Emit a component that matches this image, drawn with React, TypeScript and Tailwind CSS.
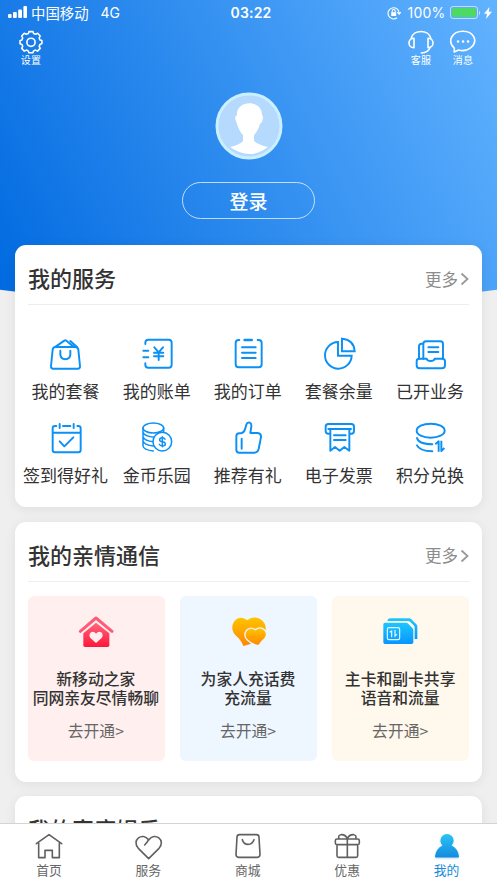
import type { ReactNode } from "react";
import { clsx } from "clsx";

type Item = { label: string; icon: ReactNode };

// Thin outlined icon used in the service grid
const LineIcon = ({ box, children }: { box: string; children: ReactNode }) => (
	<svg
		viewBox={box}
		className="size-9"
		fill="none"
		stroke="#0b90f5"
		strokeWidth="5.8"
		strokeLinecap="round"
		strokeLinejoin="round"
	>
		{children}
	</svg>
);

const services: Item[] = [
	{
		label: "我的套餐",
		icon: (
			<LineIcon box="99 33 108 108">
				<path d="M121 66h60q8 0 9 8l5 49q1 8-7 8h-73q-8 0-7-8l5-49q1-8 8-8z" />
				<path d="M136 77v12q1 13 15 14 14-1 15-14V77" />
				<path d="M122 65l26-18q3-2 6 0l22 18M166 48l20 18" />
			</LineIcon>
		),
	},
	{
		label: "我的账单",
		icon: (
			<LineIcon box="372 33 108 108">
				<path d="M391 57v-4q0-9 9-9h61q9 0 9 9v66q0 9-9 9h-61q-9 0-9-9v-4" />
				<path d="M385 77h15M385 97h15M418 67l13 15 13-15M431 83v22M417 83h28M417 94h28" />
			</LineIcon>
		),
	},
	{
		label: "我的订单",
		icon: (
			<LineIcon box="-60 33 108 108">
				<path d="M-32 45h-2q-9 0-9 9v64q0 9 9 9h60q9 0 9-9V54q0-9-9-9h-3" />
				<path d="M-16 45H5" strokeWidth="8" />
				<path d="M-24 67h41M-24 83h41M-24 99h41" />
			</LineIcon>
		),
	},
	{
		label: "套餐余量",
		icon: (
			<LineIcon box="213 33 108 108">
				<path d="M264 51a40 40 0 1 0 41 41h-41z" strokeLinejoin="miter" />
				<path d="M276 41v38h38q-2-35-38-38z" strokeLinejoin="miter" />
			</LineIcon>
		),
	},
	{
		label: "已开业务",
		icon: (
			<LineIcon box="486 33 108 108">
				<path d="M507 101V64q0-8 8-8h5M520 101V57q0-8 8-8h43q8 0 8 8v44M535 67h30M535 81h30" />
				<path d="M507 101h23q1 7 12 7t12-7h23q8 0 8 8v12q0 9-9 9h-67q-9 0-9-9v-12q0-8 7-8z" />
			</LineIcon>
		),
	},
	{
		label: "签到得好礼",
		icon: (
			<LineIcon box="99 285 108 108">
				<path d="M124 303h-4q-7 0-7 7v65q0 7 7 7h70q7 0 7-7v-65q0-7-7-7h-3M113 323h84M144 303h22" />
				<path d="M134 297v12M176 297v12M134 349l14 15 27-27" />
			</LineIcon>
		),
	},
	{
		label: "金币乐园",
		icon: (
			<LineIcon box="372 285 108 108">
				<g strokeWidth="4.5">
					<ellipse cx="415" cy="309" rx="31" ry="15" />
					<path d="M384 310v53q2 12 31 15M446 309v12M384 322q5 13 34 15M384 335q5 13 31 15M384 348q5 13 31 15" />
					<circle cx="442" cy="350" r="28" fill="#fff" />
					<path d="M450 343q-2-5-8-5-8 0-8 6t8 6q9 1 9 7t-9 6q-7 0-9-5M442 335v30" />
				</g>
			</LineIcon>
		),
	},
	{
		label: "推荐有礼",
		icon: (
			<LineIcon box="-60 285 108 108">
				<path d="M-32 325h5q9-1 12-12l4-14q3-8 10-6 6 2 5 11l-3 20h22q11 1 10 12l-7 36q-3 11-13 11h-45q-9 0-9-9v-40q0-9 9-9z" />
				<path d="M-25 341v30" />
			</LineIcon>
		),
	},
	{
		label: "电子发票",
		icon: (
			<LineIcon box="213 285 108 108">
				<path d="M238 326h-3q-8 0-8-8v-13q0-8 8-8h69q8 0 8 8v13q0 8-8 8h-3" />
				<path d="M235 312h68M241 312v65l14-11 14 11 14-11 15 11v-65M252 331h35M252 345h35" />
			</LineIcon>
		),
	},
	{
		label: "积分兑换",
		icon: (
			<LineIcon box="486 285 108 108">
				<ellipse cx="542" cy="317" rx="42" ry="21" />
				<path d="M501 339q4 18 46 19M501 361q8 17 46 18" />
				<path d="M556 358l10-9v31M574 347v31l9-9" strokeLinecap="butt" />
			</LineIcon>
		),
	},
];

const familyCards = [
	{
		lines: ["新移动之家", "同网亲友尽情畅聊"],
		bg: "bg-[#ffefef]",
		icon: (
			<svg viewBox="189 72 108 108" className="size-9">
				<defs>
					<linearGradient id="home" x1="0" y1="0" x2="0" y2="1">
						<stop offset="0" stopColor="#ff6680" />
						<stop offset="1" stopColor="#ff1738" />
					</linearGradient>
				</defs>
				<path d="M196 124l47-40 48 40" fill="none" stroke="#ff5b78" strokeWidth="9" strokeLinecap="round" strokeLinejoin="round" />
				<path d="M205 130l38-32 40 32v36q0 5-5 5h-68q-5 0-5-5z" fill="url(#home)" />
				<path d="M243 159l-16-14q-8-10 1-18 9-5 15 4 7-9 16-4 8 8 0 18z" fill="#ffefef" />
			</svg>
		),
	},
	{
		lines: ["为家人充话费", "充流量"],
		bg: "bg-[#eef6ff]",
		icon: (
			<svg viewBox="645 72 108 108" className="size-9">
				<defs>
					<linearGradient id="hearts" x1="0" y1="0" x2="0" y2="1">
						<stop offset="0" stopColor="#ffc400" />
						<stop offset="1" stopColor="#ff8500" />
					</linearGradient>
				</defs>
				<path d="M685 168q-5-17-25-34c-23-25 7-69 37-43 21-20 62-2 54 32q-3 20-36 37z" fill="url(#hearts)" />
				<path d="M731 167q-21-3-34-17c-18-15 0-47 24-31 19-15 44 7 28 27q-10 8-18 21z" fill="url(#hearts)" stroke="#eef6ff" strokeWidth="4" />
			</svg>
		),
	},
	{
		lines: ["主卡和副卡共享", "语音和流量"],
		bg: "bg-[#fff8ec]",
		icon: (
			<svg viewBox="398 72 108 108" className="size-9">
				<defs>
					<linearGradient id="sim" x1="0" y1="0" x2="0" y2="1">
						<stop offset="0" stopColor="#1cc8ff" />
						<stop offset="1" stopColor="#0795ff" />
					</linearGradient>
				</defs>
				<path d="M414 93q1-8 8-8h58q3 0 6 3l15 15q3 3 3 7v37h-8v-34q0-4-3-7l-10-10q-3-3-7-3z" fill="url(#sim)" />
				<path d="M407 98h63q3 0 5 2l14 14q3 3 3 6v37q0 5-5 5h-80q-5 0-5-5v-54q0-5 5-5z" fill="url(#sim)" />
				<g fill="none" stroke="#e8f8ff" strokeWidth="3.5">
					<rect x="414" y="113" width="37" height="36" rx="5" />
					<path d="M421 127l6-4v19M437 120v22M437 124v14l6-5" />
				</g>
			</svg>
		),
	},
];

const tabs: Item[] = [
	{
		label: "首页",
		icon: <path d="M109 189l38-27 38 27M116 186v45h19v-22h22v22h21v-45" />,
	},
	{
		label: "服务",
		icon: <path d="M149 234l-31-31c-22-24 13-51 31-25 18-26 53 1 31 25l-31 31M149 177q-4 8-12 16" />,
	},
	{
		label: "商城",
		icon: <path d="M122 162h50q8 0 8 8l3 51q0 9-8 9h-56q-8 0-8-9l3-51q0-8 8-8zM130 177q4 14 17 14t18-14" />,
	},
	{
		label: "优惠",
		icon: (
			<path d="M117 175h62q5 0 5 5v7q0 5-5 5h-62q-5 0-5-5v-7q0-5 5-5zM117 192v33q0 5 5 5h52q5 0 5-5v-33M148 175v55M148 174q-6-13-19-12-10 2-6 12M148 174q6-13 19-12 10 2 6 12" />
		),
	},
	{ label: "我的", icon: null },
];

const StatusBar = () => (
	<div className="flex h-[25px] items-center justify-between pr-[5px] pl-2 text-[14px]">
		<div className="flex w-48 items-center">
			<svg viewBox="0 0 19 12" className="mr-1 h-3 w-[19px]" fill="#fff">
				<rect y="8" width="3.6" height="4" rx="1" />
				<rect x="5" y="6" width="3.8" height="6" rx="1" />
				<rect x="10.2" y="3.5" width="3.8" height="8.5" rx="1" />
				<rect x="15.4" width="3.6" height="12" rx="1" />
			</svg>
			<span className="text-[14.4px]">中国移动</span>
			<span className="ml-3 font-[Inter]">4G</span>
		</div>
		<span className="pl-0.5 font-[Inter] font-semibold tracking-[0.2px]">03:22</span>
		<div className="flex w-48 items-center justify-end">
			<svg viewBox="0 0 14 14" className="mr-[7px] size-3.5" fill="none" stroke="#fff" strokeWidth="1.1">
				<path d="M10 11.8A5.6 5.6 0 1 1 12.2 7M10.2 6.2l2 2 1.6-2" />
				<rect x="4.2" y="6.2" width="5" height="3.8" rx=".5" fill="#fff" stroke="none" />
				<path d="M5.2 6.4V5a1.5 1.5 0 0 1 3 0v1.4" />
			</svg>
			<span className="font-[Inter] tracking-[0.2px]">100%</span>
			<span className="ml-1 h-[13px] w-7 rounded-[3px] border border-white/60 p-px">
				<span className="block h-full rounded-[1.5px] bg-[#4cd964]" />
			</span>
			<span className="ml-px h-1 w-[1.5px] rounded-r bg-white/60" />
			<svg viewBox="0 0 8 12" className="ml-1 h-3 w-2" fill="#fff">
				<path d="M5.5 0L0 6.8h3L2 12l6-7.3H4.8z" />
			</svg>
		</div>
	</div>
);

const TopAction = ({ label, icon }: Item) => (
	<div className="flex w-[42px] flex-col items-center">
		<svg viewBox="0 0 26 24" className="h-6 w-[26px]" fill="none" stroke="#fff" strokeWidth="1.6" strokeLinecap="round" strokeLinejoin="round">
			{icon}
		</svg>
		<span className="-mt-px text-[10px] leading-[13px] tracking-[0.2px]">{label}</span>
	</div>
);

const CardTitle = ({ title, more = true }: { title: string; more?: boolean }) => (
	<div className="flex h-[60px] items-center justify-between border-b border-[#eee] pt-[7px]">
		<h2 className="-mt-0.5 font-medium text-[22px] text-[#333] leading-[30px]">{title}</h2>
		{more && (
			<span className="flex items-center pt-0.5 text-[16.5px] text-[#8c8c8c]">
				更多
				<svg viewBox="0 0 9 14" className="ml-0.5 h-3.5 w-[9px]" fill="none" stroke="#999" strokeWidth="1.8">
					<path d="M1.5 1.5L7.5 7l-6 5.5" />
				</svg>
			</span>
		)}
	</div>
);

const cardStyles = "rounded-[11px] bg-white px-[13px] shadow-[0_2px_12px_rgba(0,0,0,0.07)]";

const Hero = () => (
	<header className="h-[310px] bg-[linear-gradient(63deg,#0069e0_0%,#62b3ff_100%)] text-white [clip-path:circle(1900px_at_50%_-1594px)]">
		<StatusBar />
		<div className="flex justify-between pt-[5px] pr-[13px] pl-2.5">
			<TopAction
				label="设置"
				icon={
					<>
						<path d="M10.4 3.5L11 1.6h4l.6 1.9 2 .8 2-1 2.6 2.7-1 2 .8 2 1.9.6v3l-1.9.8-.8 2 1 2-2.7 2.7-2-1-2 .8-.6 1.8h-4l-.6-1.8-2-.8-2 1-2.6-2.7 1-2-.8-2-1.9-.7v-3l1.9-.7.8-2-1-2 2.6-2.7 2 1z" />
						<circle cx="13" cy="12.3" r="4.1" />
					</>
				}
			/>
			<div className="flex">
				<TopAction
					label="客服"
					icon={
						<>
							<path d="M3.2 8.5C5.2-.8 20.8-.8 22.8 8.5M22.3 17q-2 5.8-9 6" />
							<path d="M6 8.3v9.400c-6.700 0-6.700-9.400 0-9.400zM20 8.300v9.400c6.700 0 6.700-9.400 0-9.400z" />
						</>
					}
				/>
				<TopAction
					label="消息"
					icon={
						<>
							<path d="M4.400 18.400C-3.500 10.800 2.400 1.300 13 1.300S28.500 11 21 17.500c-3.500 3-8.300 3.700-12.400 2.500l-4.400 2z" />
							<path d="M8 11.400h.1M13 11.400h.1M18 11.400h.1" strokeWidth="2.500" />
						</>
					}
				/>
			</div>
		</div>
		<div className="mt-[26px] flex flex-col items-center">
			<svg viewBox="0 0 68 68" className="size-[68px]">
				<circle cx="34" cy="34" r="32" fill="#b5dafd" stroke="#caefff" strokeWidth="3" />
				<path d="M21 29q-2-5 1-6c-1-15 25-16 25 0q2 1 0 7l-2 2q-2 7-6 11v6q5 4 14 6-18 14-38 0 9-2 13-6v-6q-4-4-6-11z" fill="#fff" />
			</svg>
			<button type="button" className="mt-[22px] h-[36.500px] w-[133px] rounded-full border border-white/70 font-medium text-[19px] leading-none">
				登录
			</button>
		</div>
	</header>
);

const TabBar = () => (
	<nav className="z-10 grid h-[60px] shrink-0 grid-cols-5 border-t border-[#d4d4d4] bg-white">
		{tabs.map(({ label, icon }) => (
			<div
				key={label}
				className={clsx("flex flex-col items-center pt-[7px] pr-[1.500px] text-[12.800px]", icon ? "text-[#666]" : "text-[#138bdc]")}
			>
				{icon ? (
					<svg viewBox="102 151 90 90" className="size-[30px]" fill="none" stroke="#606060" strokeWidth="4.800" strokeLinecap="round" strokeLinejoin="round">
						{icon}
					</svg>
				) : (
					<svg viewBox="0 0 30 30" className="size-[30px] drop-shadow-[0_1px_1px_rgba(20,140,225,0.3)]">
						<defs>
							<linearGradient id="me" x1="0" y1="0" x2="0" y2="1">
								<stop offset="0" stopColor="#2bc4f3" />
								<stop offset="1" stopColor="#128ae0" />
							</linearGradient>
						</defs>
						<path d="M10.500 14.500a6.600 6.600 0 1 1 9 0Q26 17.500 27 25.500q0 1-1 1H4q-1 0-1-1 1-8 7.500-11z" fill="url(#me)" />
					</svg>
				)}
				<span className="leading-[18px]">{label}</span>
			</div>
		))}
	</nav>
);

export default function App() {
	return (
		<div className="flex h-[883px] w-[497px] flex-col overflow-hidden bg-[#efefef] font-['Noto_Sans_CJK_SC',sans-serif]">
			<main className="min-h-0 flex-1 overflow-hidden">
				<Hero />
				<div className="relative -mt-[65px] flex flex-col gap-[14.500px] px-[15px]">
					<section className={clsx(cardStyles, "h-[262px]")}>
						<CardTitle title="我的服务" />
						<div className="-mr-[6.500px] -ml-2 grid grid-cols-5 pt-[31px]">
							{services.map(({ label, icon }) => (
								<div key={label} className="flex h-[84px] flex-col items-center">
									{icon}
									<span className="mt-[7px] whitespace-nowrap text-[17px] text-[#333] leading-6">{label}</span>
								</div>
							))}
						</div>
					</section>

					<section className={clsx(cardStyles, "h-[260px]")}>
						<CardTitle title="我的亲情通信" />
						<div className="grid grid-cols-3 gap-[15.500px] pt-[14.500px]">
							{familyCards.map(({ lines, bg, icon }) => (
								<div key={lines[0]} className={clsx("flex h-[165px] flex-col items-center rounded-md pt-[18px] pr-px", bg)}>
									{icon}
									<div className="mt-[19px] whitespace-nowrap text-center font-medium text-[#333] text-[15.800px] leading-[19px]">
										{lines.map((line) => (
											<p key={line}>{line}</p>
										))}
									</div>
									<span className="mt-3 text-[#666] text-[15.800px] leading-6">去开通&gt;</span>
								</div>
							))}
						</div>
					</section>

					<section className={clsx(cardStyles, "h-[260px]")}>
						<CardTitle title="我的家庭娱乐" more={false} />
					</section>
				</div>
			</main>
			<TabBar />
		</div>
	);
}
